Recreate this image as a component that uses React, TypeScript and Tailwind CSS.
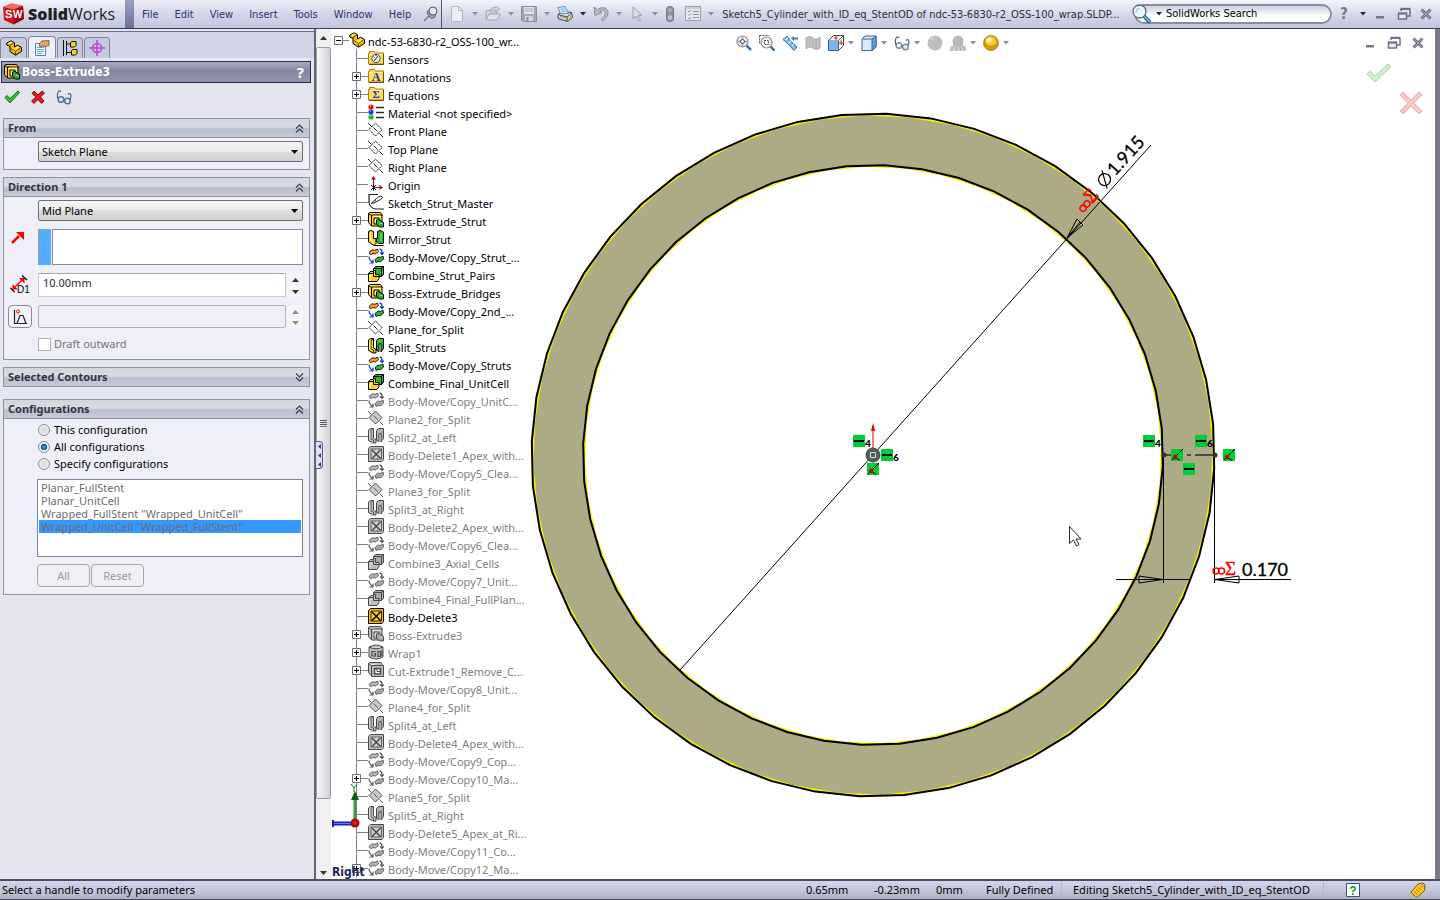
import { useState } from "react";
import type { ReactNode } from "react";

/* ---------- shared bits ---------- */

function Caret({ dark = false }: { dark?: boolean }) {
  return (
    <svg viewBox="0 0 6 4" className="h-1 w-1.5 shrink-0" aria-hidden="true">
      <path d="M0 0h6L3 3.5z" fill={dark ? "#25254f" : "#8b8d9c"} />
    </svg>
  );
}

function Svg16({ children }: { children: ReactNode }) {
  return (
    <svg viewBox="0 0 16 16" className="block h-4 w-4 shrink-0" fill="none" aria-hidden="true">
      {children}
    </svg>
  );
}

/* ---------- feature tree icons ---------- */

type Kind =
  | "sensors" | "annotations" | "equations" | "material" | "plane" | "origin" | "sketch"
  | "extrude" | "mirror" | "move" | "combine" | "split" | "delete" | "wrap" | "cut";

function PartIcon() {
  return (
    <Svg16>
      <path d="M.8 3 5 .8l3.500 2v4l3-1.600 4 2.200v4L9.500 15.200 4 11.500V6.500L.8 5z" fill="#f0b800" stroke="#000" strokeLinejoin="round" />
      <path d="M1.500 3.200 5 1.500l2.500 1.400L4.300 4.600zM5.500 7.500 8 8.800l3.500-2.600 3 1.500-5 3.500L5 8.500z" fill="#ffe45c" />
      <path d="M4.300 4.800v2M4.300 4.800 8 2.900M9.500 11.300V15M9.500 11.300l5.500-3.700M4.500 8l5 3.300" stroke="#4a3600" strokeWidth=".8" />
    </Svg16>
  );
}

function FolderBase({ children }: { children: ReactNode }) {
  return (
    <Svg16>
      <path d="M.5 3.500h1v-2h5l1 1.500h8v11H.5z" fill="#ffdc5e" stroke="#b87a00" />
      <path d="M1.500 4.500h13" stroke="#fff3b8" />
      <path d="M1 14.500h14.500V4" stroke="#6b4700" />
      {children}
    </Svg16>
  );
}

function FeatureIcon({ kind, dim }: { kind: Kind; dim: boolean }) {
  const ink = dim ? "#4a4a4a" : "#000";
  const yellow = dim ? "#bdbdbd" : "#ffd21c";
  const pale = dim ? "#dedede" : "#fff2a0";
  const green = dim ? "#a8a8a8" : "#22b532";
  const paleGreen = dim ? "#c8c8c8" : "#7be07c";
  const orange = dim ? "#b4b4b4" : "#ff9a1c";
  const blue = dim ? "#555" : "#1434d8";
  switch (kind) {
    case "sensors":
      return (
        <FolderBase>
          <circle cx="8" cy="8.500" r="4.200" fill="#e9f1fb" stroke="#34424f" />
          <path d="m6 11 4-5M5.500 6.500l1 1M8 5v1" stroke="#1b2b3a" />
        </FolderBase>
      );
    case "annotations":
      return (
        <FolderBase>
          <text x="8" y="13" textAnchor="middle" fontSize="12" fontWeight="bold" fontFamily="Liberation Serif, serif" fill="#1733c9">A</text>
        </FolderBase>
      );
    case "equations":
      return (
        <FolderBase>
          <text x="8" y="12" textAnchor="middle" fontSize="11" fontWeight="bold" fontFamily="Liberation Serif, serif" fill="#1733c9">Σ</text>
        </FolderBase>
      );
    case "material":
      return (
        <Svg16>
          <circle cx="3" cy="3" r="2.600" fill="#e01414" />
          <circle cx="3" cy="8" r="2.600" fill="#1638e0" />
          <circle cx="3" cy="13" r="2.600" fill="#17b52c" />
          <path d="M2 2h1M2 7h1M2 12h1" stroke="#fff" />
          <path d="M8 3.500h8M8 8.500h8M8 13.500h8" stroke="#2b2b2b" strokeWidth="1.500" />
        </Svg16>
      );
    case "plane":
      return (
        <Svg16>
          <path d="M1 7.500 7.500 1 14 7.500 7.500 14z" fill={dim ? "#c9c9c9" : "none"} stroke={dim ? "#555" : "#222"} strokeDasharray={dim ? undefined : "2 .6"} />
          <path d="m0 1 3.500 3.500M5.500 5.500l4 4M11.500 11.500 15 15" stroke={dim ? "#555" : "#222"} />
        </Svg16>
      );
    case "origin":
      return (
        <Svg16>
          <path d="M5.500 11V2M6 11.500h7" stroke="#a01414" strokeWidth="1.200" />
          <path d="M5.500 0 8 3.500H3zM15 11.500 11.500 9v5z" fill="#a01414" />
          <path d="m3 9 5 5M8 9l-5 5M5.500 8.500v6" stroke="#111" />
        </Svg16>
      );
    case "sketch":
      return (
        <Svg16>
          <path d="M10 .5H1v8q1 6 7 6.500h8" stroke="#222" strokeWidth="1.200" />
          <path d="M4 8.500 11 2.500q2.500-1 3.500.5 0 1.500-2 2.500L6 9z" fill="#fff" stroke="#222" />
          <path d="m7 6.500 1.500 1M3 9.500l2-.5" stroke="#222" />
        </Svg16>
      );
    case "extrude":
      return (
        <Svg16>
          <path d="M.5 1.500 2 .5h10.500l1.500 2V4M.5 1.500v9L3.500 14V3.500z" fill={yellow} stroke={ink} />
          <path d="M3.500 3h10.500v11H3.500z" fill={yellow} stroke={ink} />
          <path d="M5 4.500h8" stroke={pale} strokeWidth="1.500" />
          <path d="M6 6h5v2.500H8.500V12H6z" fill={pale} stroke={ink} />
          <path d="m8.500 8 2.500-.5 4.500 3V15h-4l-3-3z" fill={green} stroke={ink} />
          <path d="M11.500 11.500h3" stroke={paleGreen} />
        </Svg16>
      );
    case "mirror":
      return (
        <Svg16>
          <path d="M.5 1.500 3 .5l2.500 1v7H8v5L6 15.500.5 12z" fill={yellow} stroke={ink} />
          <path d="M2.500 2.500v8l3.500 2" stroke={pale} />
          <path d="m14.500 1.500-2.500-1-2.500 1v7H8.300V11l2.200 2.500h5V2z" fill={green} stroke={ink} />
          <path d="M13 3v8" stroke={paleGreen} />
          <path d="M6 15.500h9.500" stroke={ink} />
        </Svg16>
      );
    case "move":
      return (
        <Svg16>
          <path d="M1 4.500 4 1.800l3 .4L9.500 1l1 2.500L7.500 6 5 5.500 2.500 6.800z" fill={orange} stroke={ink} strokeWidth=".8" />
          <path d="M7 11.500 10 9l2.500.3L15 8l.7 3-3 2.700-2.700-.3L8 14.500z" fill={green} stroke={ink} strokeWidth=".8" />
          <path d="M11.500.8q3 .4 2.500 5M12 4.500l2 2 1.800-2M1 8.500q.2 4 4 6M5 11.500V15H1.500" stroke={blue} strokeWidth="1.200" />
        </Svg16>
      );
    case "combine":
      return (
        <Svg16>
          <path d="m5.500 2.500 2-2h8v8l-2 2h-8z" fill={green} stroke={ink} />
          <path d="M5.500 2.500h8v8M13.500 2.500l2-2" stroke={ink} />
          <path d="m.5 7.500 2-2h3v-1h2v4h3.500v4l-2 3H.5z" fill={yellow} stroke={ink} />
          <path d="M5.500 5.500v5H11M.5 7.500h5" stroke={ink} />
          <path d="M2 9.500h2.500M2 9.500v4" stroke={pale} />
        </Svg16>
      );
    case "split":
      return (
        <Svg16>
          <path d="m.5 2 2-1.500h3v9.500l2.500 1.500v3.500H5L.5 12.500z" fill={yellow} stroke={ink} />
          <path d="M3 2.500v8.500L5.500 12M3 2.500l2-1.500M5.500 12v3" stroke={ink} strokeWidth=".8" />
          <path d="M8.500 2.500 10.500.5h5v10l-2.500 3.500V5.500l-2 .5v7.500l-2.500-1z" fill={green} stroke={ink} />
          <path d="M1.800 3v8" stroke={pale} />
          <path d="M10 3.500 14 2.500" stroke={paleGreen} />
        </Svg16>
      );
    case "delete":
      return (
        <Svg16>
          <path d="M.5 2.500 2.500.5h13v13L14 15.500H.5z" fill={dim ? "#bdbdbd" : "#ffb800"} stroke={ink} />
          <path d="M3 3h10.500v10H3z" fill={dim ? "#cfcfcf" : "#ffd21c"} stroke={ink} strokeWidth=".8" />
          <path d="m4 4 8.500 8.500M12.500 4 4 12.500" stroke={ink} strokeWidth="1.500" />
        </Svg16>
      );
    case "wrap":
      return (
        <Svg16>
          <path d="M1 3q7-4 14 0v10q-7 4-14 0z" fill={yellow} stroke={ink} />
          <path d="M1 3q7 3.500 14 0" fill={pale} stroke={ink} />
          <path d="M7.500 7.500H4v4.500h3.500V9.500H6M10 7.500h2.500v5H10zM14 6v6" stroke={ink} strokeWidth="1.200" />
        </Svg16>
      );
    case "cut":
      return (
        <Svg16>
          <path d="M.5 1.500 2 .5h11l1.500 2V4M.5 1.500v9L3.500 14V3.500z" fill={yellow} stroke={ink} />
          <path d="M3.500 3.500h12v11h-12z" fill={yellow} stroke={ink} />
          <path d="M6.500 6.500h6v5.500h-6z" fill="#fff" stroke={ink} strokeWidth="1.500" />
          <path d="M9 7v2.500h3" stroke={ink} />
        </Svg16>
      );
  }
}

/* ---------- feature tree ---------- */

type Feature = { label: string; kind: Kind; dim?: boolean; branch?: boolean };

const features: Feature[] = [
  { label: "Sensors", kind: "sensors" },
  { label: "Annotations", kind: "annotations", branch: true },
  { label: "Equations", kind: "equations", branch: true },
  { label: "Material <not specified>", kind: "material" },
  { label: "Front Plane", kind: "plane" },
  { label: "Top Plane", kind: "plane" },
  { label: "Right Plane", kind: "plane" },
  { label: "Origin", kind: "origin" },
  { label: "Sketch_Strut_Master", kind: "sketch" },
  { label: "Boss-Extrude_Strut", kind: "extrude", branch: true },
  { label: "Mirror_Strut", kind: "mirror" },
  { label: "Body-Move/Copy_Strut_...", kind: "move" },
  { label: "Combine_Strut_Pairs", kind: "combine" },
  { label: "Boss-Extrude_Bridges", kind: "extrude", branch: true },
  { label: "Body-Move/Copy_2nd_...", kind: "move" },
  { label: "Plane_for_Split", kind: "plane" },
  { label: "Split_Struts", kind: "split" },
  { label: "Body-Move/Copy_Struts", kind: "move" },
  { label: "Combine_Final_UnitCell", kind: "combine" },
  { label: "Body-Move/Copy_UnitC...", kind: "move", dim: true },
  { label: "Plane2_for_Split", kind: "plane", dim: true },
  { label: "Split2_at_Left", kind: "split", dim: true },
  { label: "Body-Delete1_Apex_with...", kind: "delete", dim: true },
  { label: "Body-Move/Copy5_Clea...", kind: "move", dim: true },
  { label: "Plane3_for_Split", kind: "plane", dim: true },
  { label: "Split3_at_Right", kind: "split", dim: true },
  { label: "Body-Delete2_Apex_with...", kind: "delete", dim: true },
  { label: "Body-Move/Copy6_Clea...", kind: "move", dim: true },
  { label: "Combine3_Axial_Cells", kind: "combine", dim: true },
  { label: "Body-Move/Copy7_Unit...", kind: "move", dim: true },
  { label: "Combine4_Final_FullPlan...", kind: "combine", dim: true },
  { label: "Body-Delete3", kind: "delete" },
  { label: "Boss-Extrude3", kind: "extrude", dim: true, branch: true },
  { label: "Wrap1", kind: "wrap", dim: true, branch: true },
  { label: "Cut-Extrude1_Remove_C...", kind: "cut", dim: true, branch: true },
  { label: "Body-Move/Copy8_Unit...", kind: "move", dim: true },
  { label: "Plane4_for_Split", kind: "plane", dim: true },
  { label: "Split4_at_Left", kind: "split", dim: true },
  { label: "Body-Delete4_Apex_with...", kind: "delete", dim: true },
  { label: "Body-Move/Copy9_Cop...", kind: "move", dim: true },
  { label: "Body-Move/Copy10_Ma...", kind: "move", dim: true, branch: true },
  { label: "Plane5_for_Split", kind: "plane", dim: true },
  { label: "Split5_at_Right", kind: "split", dim: true },
  { label: "Body-Delete5_Apex_at_Ri...", kind: "delete", dim: true },
  { label: "Body-Move/Copy11_Co...", kind: "move", dim: true },
  { label: "Body-Move/Copy12_Ma...", kind: "move", dim: true, branch: true },
];

function Expander({ open = false }: { open?: boolean }) {
  return (
    <svg viewBox="0 0 9 9" className="block h-[9px] w-[9px] shrink-0" aria-hidden="true">
      <path d="M.5.5h8v8h-8z" fill="#fff" stroke="#6d6d6d" />
      <path d={open ? "M2 4.500h5" : "M2 4.500h5M4.500 2v5"} stroke="#000" />
    </svg>
  );
}

function FeatureTree() {
  return (
    <div className="flex w-[202px] flex-col overflow-hidden pt-[2px] font-['Noto_Sans',sans-serif] text-[11px] leading-[18px] text-black">
      <div className="flex h-[18px] shrink-0 items-center whitespace-nowrap">
        <Expander open />
        <span className="h-px w-1.5 shrink-0 bg-[#808080]" />
        <span className="mr-[3px]"><PartIcon /></span>
        <span className="pt-1">ndc-53-6830-r2_OSS-100_wr...</span>
      </div>
      <ul className="min-h-0 flex-1 overflow-hidden">
        {features.map((f) => (
          <li key={f.label} className="flex h-[18px] items-center whitespace-nowrap pl-[18px]">
            <span className="flex h-[18px] w-[9px] shrink-0 items-center justify-center bg-[linear-gradient(#808080,#808080)] bg-[length:1px_100%] bg-center bg-no-repeat">
              {f.branch && <Expander />}
            </span>
            <span className={f.branch ? "h-px w-[7px] shrink-0 bg-[#808080]" : "-ml-1 h-px w-[11px] shrink-0 bg-[#808080]"} />
            <span className="mr-1"><FeatureIcon kind={f.kind} dim={!!f.dim} /></span>
            <span className={f.dim ? "pt-[3px] text-[#808080]" : "pt-[3px] text-black"}>{f.label}</span>
          </li>
        ))}
      </ul>
    </div>
  );
}

/* ---------- title bar ---------- */

const menus = ["File", "Edit", "View", "Insert", "Tools", "Window", "Help"];

function NewIcon() {
  return <Svg16><path d="M2.500.5h7l4 4v11h-11z" fill="#eceef4" stroke="#b3b5c0" /><path d="M9.500.5v4h4" stroke="#b3b5c0" /></Svg16>;
}
function OpenIcon() {
  return (
    <Svg16>
      <path d="M1 14V4.500h4l1 1.500h6v2" fill="#d3d5dc" stroke="#a2a4ae" />
      <path d="m1 14 3-6h11.500L12 14z" fill="#dfe1e8" stroke="#a2a4ae" />
      <path d="M5 4q2-3.500 6-2.500V0l4 3-4 3V4.200Q8 3.500 5 4z" fill="#d3d5dc" stroke="#a2a4ae" strokeWidth=".8" />
    </Svg16>
  );
}
function SaveIcon() {
  return (
    <Svg16>
      <path d="M.5.5h15v15H2l-1.500-1.500z" fill="#a5a7b0" stroke="#8c8e98" />
      <path d="M3 1h10v7H3z" fill="#e2e3e9" /><path d="M4 3h8M4 5h8" stroke="#a8aab3" />
      <path d="M4 10h8v5H4z" fill="#d5d6dd" /><path d="M5.500 11h2v4h-2z" fill="#8c8e98" />
    </Svg16>
  );
}
function PrintIcon() {
  return (
    <Svg16>
      <path d="m1 8.500 4-3 9.500 1 1 5-5 4L1 12.500z" fill="#dcdcdc" stroke="#3f3f46" />
      <path d="M3.500 7.500 1 1.500 8 .5l3.500 7z" fill="#d8eefc" stroke="#5c92ba" /><path d="m3.500 3.500 4-.7M4.500 5.500l4-.6" stroke="#72a6cf" />
      <path d="m1 8.500 9 2.500 5-4M10 11v4.500" stroke="#3f3f46" /><path d="m3 10.500 5.500 1.700" stroke="#888" /><path d="m11.500 12.500 3-2.200" stroke="#e8b800" strokeWidth="1.500" />
    </Svg16>
  );
}
function UndoIcon() {
  return <Svg16><path d="m1 1 1 8.500 7-3-2.500-1Q10 3 12 5.500q1.500 3.500-4 8l2 1.500q7-6 4.500-11Q11-.5 4.500 3.500z" fill="#b9bbc5" stroke="#8c8e98" /></Svg16>;
}
function SelectIcon() {
  return <Svg16><path d="M4 .8v12L7 10l2.500 5 2-1L9 9.300h4z" fill="#dcdee7" stroke="#9c9ea9" /></Svg16>;
}
function RebuildIcon() {
  return <Svg16><rect x="4.500" y=".5" width="7" height="15" rx="3" fill="#8f9099" stroke="#77787f" /><circle cx="8" cy="4" r="2" fill="#a9aab2" /><circle cx="8" cy="11.500" r="2.200" fill="#c3c4cb" /></Svg16>;
}
function OptionsIcon() {
  return (
    <Svg16>
      <path d="M.5.5h15v14H.5z" fill="#e6e7ee" stroke="#9fa1ab" /><path d="M1 2h14" stroke="#b7b9c2" />
      <path d="M8 5.500h6M8 8.500h6M8 11.500h6" stroke="#94969f" /><path d="m3 5 1 1 2-2M3 8.500l1 1 2-2M3 12l1 1 2-2" stroke="#94969f" />
    </Svg16>
  );
}

const tools: { name: string; icon: ReactNode; caret: boolean; active?: boolean }[] = [
  { name: "New", icon: <NewIcon />, caret: true },
  { name: "Open", icon: <OpenIcon />, caret: true },
  { name: "Save", icon: <SaveIcon />, caret: true },
  { name: "Print", icon: <PrintIcon />, caret: true, active: true },
  { name: "Undo", icon: <UndoIcon />, caret: true },
  { name: "Select", icon: <SelectIcon />, caret: true },
  { name: "Rebuild", icon: <RebuildIcon />, caret: false },
  { name: "Options", icon: <OptionsIcon />, caret: true },
];

function MinimizeIcon() {
  return <Svg16><path d="M4 10h8v2.500H4z" fill="#77798a" /></Svg16>;
}
function RestoreIcon() {
  return <Svg16><path d="M5 5V3h9v7h-3" stroke="#6f7182" strokeWidth="1.500" /><path d="M5 2.800h9" stroke="#6f7182" strokeWidth="2" /><path d="M2.500 7.500h8v5.500h-8z" fill="#eceef6" stroke="#6f7182" strokeWidth="1.500" /><path d="M2 7.500h9" stroke="#6f7182" strokeWidth="2" /></Svg16>;
}
function CloseIcon() {
  return <Svg16><path d="m3.500 3.500 9 9M12.500 3.500l-9 9" stroke="#6f7182" strokeWidth="3" /><path d="m3.500 3.500 9 9M12.500 3.500l-9 9" stroke="#a6a8b6" strokeWidth="1" /></Svg16>;
}

function TitleBar() {
  return (
    <header className="flex h-[29px] shrink-0 items-stretch border-b border-[#3d3c55] bg-[linear-gradient(#f3f6fd,#d9dcec_45%,#bfc4dc)] font-['DejaVu_Sans_Condensed','DejaVu_Sans',sans-serif] text-[11px]">
      <div className="flex w-[125px] shrink-0 items-center gap-[3px] pl-[3px]">
        <svg viewBox="0 0 22 22" className="h-[22px] w-[22px] shrink-0" aria-hidden="true">
          <path d="M0 4 9 .5l11 2.500L21 16 10.500 21.500 1 17z" fill="#d2131d" />
          <path d="M0 4 9 .5l11 2.500-9 3.500z" fill="#f46a62" />
          <path d="m11 6.500 9-3.500 1 13-10.500 5.500z" fill="#9e0912" />
          <text x="2" y="15" fontSize="11" fontWeight="bold" fontFamily="Liberation Sans, sans-serif" fill="#fff">S</text>
          <text x="10" y="15" fontSize="10" fontWeight="bold" fontFamily="Liberation Sans, sans-serif" fill="#fff">W</text>
        </svg>
        <span className="font-['Open_Sans',sans-serif] text-[16px] text-[#222]"><b className="font-extrabold">Solid</b>Works</span>
      </div>
      <div className="w-[9px] shrink-0 bg-[linear-gradient(#9da1c0,#6c7098)]" />
      <nav className="flex shrink-0 items-center gap-4 border-r border-[#55566e] bg-[linear-gradient(#eceef8,#d3d6e8_50%,#c3c7dd)] pr-0.5 pl-2 text-[#2d3172]">
        {menus.map((m) => (
          <button key={m} type="button" className="pt-[2px]">{m}</button>
        ))}
        <button type="button" aria-label="Pin menu" className="-ml-1">
          <Svg16>
            <path d="m1 15 5-5" stroke="#77798c" strokeWidth="1.500" />
            <path d="M4 7 8 12.500q4 0 5-3.500L6.500 3.500Q3.500 5 4 7z" fill="#9a9cae" stroke="#55566e" strokeWidth=".8" />
            <circle cx="10" cy="5" r="4" fill="#e4e6f0" stroke="#55566e" />
          </Svg16>
        </button>
      </nav>
      <div className="flex shrink-0 items-center pl-1">
        {tools.map((t) => (
          <button key={t.name} type="button" aria-label={t.name} className={t.caret ? "flex w-9 items-center gap-[7px] pl-[3px]" : "flex w-5 items-center"}>
            {t.icon}
            {t.caret && <Caret dark={t.active} />}
          </button>
        ))}
      </div>
      <h1 className="min-w-0 flex-1 self-center overflow-hidden pt-[2px] pl-1 whitespace-nowrap text-[#2e2e3c]">
        Sketch5_Cylinder_with_ID_eq_StentOD of ndc-53-6830-r2_OSS-100_wrap.SLDP...
      </h1>
      <div className="flex shrink-0 items-center pr-1.5">
        <label className="flex h-5 w-[198px] items-center gap-1 rounded-full border-2 border-[#8b8d9b] bg-[linear-gradient(#c9cee2,#fff_60%)] pr-2">
          <svg viewBox="0 0 20 20" className="-ml-1 h-5 w-5 shrink-0" fill="none" aria-hidden="true">
            <path d="m12 12 6 6.500" stroke="#1f5f94" strokeWidth="4" />
            <path d="m12 12 6 6" stroke="#7cc0ee" strokeWidth="1.500" />
            <circle cx="7.500" cy="7.500" r="6.500" fill="#eaf6ff" stroke="#5b6b7c" strokeWidth="1.300" />
            <path d="M4 9q0-4 4-5" stroke="#a8cdea" strokeWidth="1.500" />
          </svg>
          <Caret dark />
          <input aria-label="SolidWorks Search" defaultValue="SolidWorks Search" className="min-w-0 flex-1 bg-transparent text-black outline-none" />
        </label>
        <button type="button" aria-label="Help" className="ml-1.5 flex items-center gap-2.5">
          <span className="w-3 text-center text-[15px] leading-4 font-bold text-[#77798a]">?</span>
          <Caret dark />
        </button>
        <button type="button" aria-label="Minimize" className="ml-1.5"><MinimizeIcon /></button>
        <button type="button" aria-label="Restore" className="ml-2"><RestoreIcon /></button>
        <button type="button" aria-label="Close" className="ml-1.5"><CloseIcon /></button>
      </div>
    </header>
  );
}

/* ---------- property panel ---------- */

function GlassesIcon({ tint = "#7fa6c9" }: { tint?: string }) {
  return (
    <Svg16>
      <circle cx="5" cy="10.500" r="2.800" fill="#e2eef8" stroke={tint} strokeWidth="1.400" />
      <circle cx="11.500" cy="12" r="2.800" fill="#e2eef8" stroke={tint} strokeWidth="1.400" />
      <path d="M2 10Q.5 5 2.500 2.500 4 1 5 3M7.500 11l1.500.3M14 10.500q1.500-3 .5-5.500-1.500-1-2.500.5" stroke="#59606c" strokeWidth="1.200" />
    </Svg16>
  );
}

function Group({ title, open = true, children }: { title: string; open?: boolean; children?: ReactNode }) {
  return (
    <section className="border border-[#9194a6] bg-[#efeff8]">
      <h2>
        <button type="button" aria-expanded={open} className={open ? "flex h-[19px] w-full items-center justify-between border-b border-[#9194a6] bg-[linear-gradient(#d2d5de,#d8dce2_45%,#b9bece_55%,#c6cad8)] px-1 font-bold text-[#333545]" : "flex h-[18px] w-full items-center justify-between bg-[linear-gradient(#d2d5de,#d8dce2_45%,#b9bece_55%,#c6cad8)] px-1 font-bold text-[#333545]"}>
          {title}
          <svg viewBox="0 0 9 9" className="mr-px h-[9px] w-[9px]" fill="none" stroke="#3b3d4d" strokeWidth="1.200" aria-hidden="true">
            <path d={open ? "M1 4.500 4.500 1 8 4.500M1 8.500 4.500 5 8 8.500" : "M1 .5 4.500 4 8 .5M1 4.500 4.500 8 8 4.500"} />
          </svg>
        </button>
      </h2>
      {children}
    </section>
  );
}

function Drop({ label, value, other }: { label: string; value: string; other: string }) {
  return (
    <div className="relative">
      <select aria-label={label} defaultValue={value} className="block h-[21px] w-full appearance-none rounded-xs border border-[#707070] bg-[linear-gradient(#f4f4f4,#ebebeb_50%,#dddddd_50%,#d0d0d0)] pl-[3px] text-black">
        <option>{value}</option>
        <option>{other}</option>
      </select>
      <svg viewBox="0 0 7 4" className="pointer-events-none absolute top-[9px] right-[5px] h-1 w-[7px]" aria-hidden="true"><path d="M0 0h7L3.500 4z" fill="#000" /></svg>
    </div>
  );
}

function Spinner({ off = false }: { off?: boolean }) {
  const c = off ? "#8c8c8c" : "#333";
  return (
    <div className="flex w-4 flex-col items-center justify-between bg-[#f5f5f8] pt-[5px] pb-[3px]">
      <button type="button" disabled={off} aria-label="Increase"><svg viewBox="0 0 7 4" className="block h-1 w-[7px]"><path d="M0 4h7L3.500 0z" fill={c} /></svg></button>
      <button type="button" disabled={off} aria-label="Decrease"><svg viewBox="0 0 7 4" className="block h-1 w-[7px]"><path d="M0 0h7L3.500 4z" fill={c} /></svg></button>
    </div>
  );
}

const scopes = ["This configuration", "All configurations", "Specify configurations"];
const configs = ["Planar_FullStent", "Planar_UnitCell", "Wrapped_FullStent \"Wrapped_UnitCell\"", "Wrapped_UnitCell \"Wrapped_FullStent\""];

function PropertyPanel() {
  const [scope, setScope] = useState(scopes[1]);
  return (
    <aside className="flex w-[316px] shrink-0 flex-col border-r-2 border-[#62637a] bg-[#e4e5ef] font-['Noto_Sans',sans-serif] text-[11px] leading-4">
      <div className="mt-[2px] flex h-[27px] items-end gap-px border-t border-[#6e7088] bg-[#d0d4e6]">
        <button type="button" aria-label="Feature manager" className="flex h-[21px] w-[27px] items-center justify-center rounded-t border border-b-0 border-[#8285a0] bg-[#c6cadf]"><PartIcon /></button>
        <button type="button" aria-label="Property manager" className="flex h-[22px] w-7 items-center justify-center rounded-t border border-b-0 border-[#8285a0] bg-[#eeeff7]">
          <Svg16>
            <path d="M1.500 3.500h10v12h-10z" fill="#f4f9ff" stroke="#4c86c6" /><path d="M3 7.500h7M3 9.500h7M3 11.500h7M3 13.500h5" stroke="#6ea4dc" />
            <path d="M5 4 8 1l7-.5v5l-4 1-3-.5-2 1z" fill="#dfa46c" stroke="#7c4a1c" strokeWidth=".8" />
          </Svg16>
        </button>
        <button type="button" aria-label="Configuration manager" className="flex h-[21px] w-[26px] items-center justify-center rounded-t border border-b-0 border-[#8285a0] bg-[#c6cadf]">
          <Svg16>
            <path d="M1.500 0v16M4.500 1v14M4.500 4H9M4.500 12.500H9" stroke="#111" />
            <path d="m8.500 2.500 1.500-1h4v4l-1.500 1.500h-4zM9.500 10.500l1.500-1h4v4L13.500 15h-4z" fill="#ffd21c" stroke="#111" />
          </Svg16>
        </button>
        <button type="button" aria-label="Dimension manager" className="flex h-[21px] w-[26px] items-center justify-center rounded-t border border-b-0 border-[#8285a0] bg-[#c6cadf]">
          <Svg16><circle cx="8" cy="8" r="4.500" stroke="#c23fd0" strokeWidth="1.500" /><path d="M8 0v16M0 8h16" stroke="#c23fd0" strokeWidth="1.500" /></Svg16>
        </button>
      </div>
      <div className="mx-px mt-[3px] mr-[3px] flex h-[22px] shrink-0 items-center gap-[2px] border border-[#2a2c55] bg-[linear-gradient(#a9abbf,#83859f_45%,#9496ae)] px-[2px] text-white">
        <FeatureIcon kind="extrude" dim={false} />
        <h1 className="flex-1 font-['DejaVu_Sans_Condensed','DejaVu_Sans',sans-serif] text-[12px] font-bold">Boss-Extrude3</h1>
        <button type="button" aria-label="Help" className="mr-1 text-[15px] font-bold">?</button>
      </div>
      <div className="flex h-[35px] shrink-0 items-start gap-2.5 pt-1.5 pl-1">
        <button type="button" aria-label="OK"><Svg16><path d="m1 8.500 2-2 3 3L14 2l1.500 1.500L6 14z" fill="#2fc82f" stroke="#0c6f12" /></Svg16></button>
        <button type="button" aria-label="Cancel"><Svg16><path d="m2 4.500 2-2.500 4 4 4-4 2.500 2L10.500 8l3.500 4-2.500 2.500L8 10.500l-4 4L1.500 12 6 8z" fill="#e21c1c" stroke="#8a0c0c" /></Svg16></button>
        <button type="button" aria-label="Detailed preview"><GlassesIcon tint="#4e7396" /></button>
      </div>
      <div className="flex flex-col gap-[7px] pr-1 pl-[3px]">
        <Group title="From">
          <div className="pt-[3px] pr-1.5 pb-[7px] pl-[34px]"><Drop label="From" value="Sketch Plane" other="Offset" /></div>
        </Group>
        <Group title="Direction 1">
          <div className="grid grid-cols-[34px_1fr] pt-[3px] pr-1.5 pb-[7px]">
            <span />
            <Drop label="End condition" value="Mid Plane" other="Blind" />
            <button type="button" aria-label="Reverse direction" className="mt-2 flex pl-1.5">
              <Svg16><path d="m2 14 7-7" stroke="#f00" strokeWidth="2.500" /><path d="M6 3h8v8z" fill="#f00" /></Svg16>
            </button>
            <div className="mt-2 flex h-9 gap-px">
              <div className="w-[13px] border-t border-l border-[#a0a0a0] bg-[#54aeff]" />
              <div className="flex-1 border border-[#8488a8] bg-white" />
            </div>
            <span className="mt-2 flex items-center pl-1.5">
              <svg viewBox="0 0 20 20" className="h-5 w-5" fill="none" aria-hidden="true">
                <path d="m4 13 9-9" stroke="#f00" strokeWidth="1.500" /><path d="M9 3h5.500v5.500zM2.500 9v5.500H8z" fill="#f00" />
                <path d="m12 .5 5 4.500M.5 13l4 4" stroke="#000" strokeWidth="1.200" />
                <text x="7" y="18" fontSize="10" fontFamily="Liberation Sans, sans-serif" fill="#000">D1</text>
              </svg>
            </span>
            <div className="mt-2 flex h-6 gap-px">
              <input aria-label="Depth" defaultValue="10.00mm" className="min-w-0 flex-1 border border-[#c6c9d4] border-t-[#a0a2ac] bg-white pb-1 pl-1 text-[#26284a]" />
              <Spinner />
            </div>
            <button type="button" aria-label="Draft on/off" className="mt-2 ml-1 flex h-[23px] w-6 items-center justify-center rounded border border-[#8a8c9a] bg-[#f2f2f8]">
              <Svg16><path d="M2.500 1v13.500H15M5 14.500l3-8h3l3 8" stroke="#222" strokeWidth="1.200" /><circle cx="6" cy="2.500" r="1.500" stroke="#f00" /></Svg16>
            </button>
            <div className="mt-2 flex h-[23px] gap-px">
              <input aria-label="Draft angle" disabled className="min-w-0 flex-1 rounded-xs border border-[#b0b2bc] bg-[#efeff8]" />
              <Spinner off />
            </div>
            <span />
            <label className="mt-2 flex h-4 items-center gap-[3px] text-[#73747c]">
              <input type="checkbox" disabled className="h-[13px] w-[13px] appearance-none border border-[#b4b4b4] bg-white" />
              Draft outward
            </label>
          </div>
        </Group>
        <Group title="Selected Contours" open={false} />
        <div className="pt-[5px]">
          <Group title="Configurations">
            <div className="pt-[2px] pr-1.5 pb-[7px] pl-[33px]">
              <fieldset>
                {scopes.map((s) => (
                  <label key={s} className="flex h-[17px] items-center gap-1 pl-px text-black">
                    <input type="radio" name="scope" checked={scope === s} onChange={() => setScope(s)} className="h-3 w-3 appearance-none rounded-full border border-[#8e8f8f] bg-[radial-gradient(#d8dadd,#f4f4f4)] checked:bg-[radial-gradient(circle,#2c8fd0_0_20%,#10406e_40%,#e8eef4_50%)]" />
                    {s}
                  </label>
                ))}
              </fieldset>
              <ul className="mt-[7px] h-[78px] border border-[#828296] bg-white px-px py-px leading-[13px] text-[#6d6d6d]">
                {configs.map((c, i) => (
                  <li key={c} className={i === 3 ? "h-[13px] bg-[#3399ff] pl-[2px] whitespace-nowrap" : "h-[13px] pl-[2px] whitespace-nowrap"}>{c}</li>
                ))}
              </ul>
              <div className="mt-[7px] flex gap-px">
                <button type="button" disabled className="h-[23px] w-[53px] rounded border border-[#a9aa9e] text-[#9b9c92]">All</button>
                <button type="button" disabled className="h-[23px] w-[53px] rounded border border-[#a9aa9e] text-[#9b9c92]">Reset</button>
              </div>
            </div>
          </Group>
        </div>
      </div>
    </aside>
  );
}

/* ---------- graphics area ---------- */

function ring(r: number, n: number, phase: number) {
  return Array.from({ length: n }, (_, i) => {
    const a = ((i + phase) / n) * Math.PI * 2;
    return `${(873 + r * Math.cos(a)).toFixed(1)} ${(455 + r * Math.sin(a)).toFixed(1)}`;
  }).join("L");
}
const loop = (r: number, n: number, phase: number) => `M${ring(r, n, phase)}Z`;

function Relation({ x, y, kind, tag }: { x: number; y: number; kind: "bar" | "point"; tag?: string }) {
  return (
    <g>
      <path d={`M${x} ${y}h12v12h-12z`} fill="#00cc33" />
      {kind === "bar" ? (
        <path d={`M${x + 1} ${y + 6}h10`} stroke="#000" strokeWidth="2" />
      ) : (
        <g>
          <path d={`M${x + 1} ${y + 11}L${x + 12} ${y}M${x + 4} ${y + 8}l5 3.500`} stroke="#000" />
          <circle cx={x + 4} cy={y + 8} r="2.200" fill="#d00000" />
        </g>
      )}
      {tag && <text x={x + 12} y={y + 12} fontSize="10" fontWeight="900" fontFamily="Lato, sans-serif" fill="#000">{tag}</text>}
    </g>
  );
}

function Sketch() {
  return (
    <svg viewBox="316 29 1119 850" className="pointer-events-none absolute inset-0 h-full w-full" fill="none" role="img" aria-label="Cylinder sketch, diameter 1.915, wall 0.170">
      <path d={loop(341.5, 48, 0.3) + loop(290, 48, 0.3)} fill="#acab86" fillRule="evenodd" />
      <path d={loop(340.5, 48, 0.8) + loop(289, 48, 0.8)} stroke="#f4f000" strokeWidth="2" />
      <path d={loop(341.5, 48, 0.3) + loop(290, 48, 0.3)} stroke="#000" strokeWidth="2" />
      <path d="M680 670 1151 145" stroke="#000" />
      <path d="m1067 238 10-19 6 6zl13-16" stroke="#000" />
      <g transform="translate(1105 188) rotate(-48)">
        <ellipse cx="6" cy="-6" rx="6" ry="6" stroke="#000" strokeWidth="1.200" />
        <path d="m1 2 10-16" stroke="#000" strokeWidth="1.200" />
        <text x="15" y="0" fontSize="18" fontFamily="Lato, sans-serif" fill="#000" stroke="#000" strokeWidth=".3">1.915</text>
      </g>
      <g transform="translate(1086 211) rotate(-48)">
        <circle cx="0" cy="-4" r="3" stroke="#f00" strokeWidth="1.500" /><circle cx="6" cy="-4" r="3" stroke="#f00" strokeWidth="1.500" />
        <text x="9" y="0" fontSize="20" fontFamily="Liberation Serif, serif" fill="#f00" stroke="#f00" strokeWidth=".4">Σ</text>
      </g>
      <path d="M1163.500 455v128M1214.500 455v128M1116 579.500h73M1215 579.500h76" stroke="#000" />
      <path d="M1163 579.500 1139 576v7zM1215 579.500l24-3.500v7z" stroke="#000" />
      <circle cx="1216" cy="571" r="3" stroke="#f00" strokeWidth="1.500" /><circle cx="1221.500" cy="571" r="3" stroke="#f00" strokeWidth="1.500" />
      <text x="1225" y="575" fontSize="19" fontFamily="Liberation Serif, serif" fill="#f00" stroke="#f00" strokeWidth=".4">Σ</text>
      <text x="1242" y="576" fontSize="18" fontFamily="Lato, sans-serif" fill="#000" stroke="#000" strokeWidth=".3">0.170</text>
      <path d="M1164 455h10M1187 455h4M1195 455h20" stroke="#4d4d40" strokeWidth="2" />
      <circle cx="1164" cy="455" r="2.500" fill="#333" /><circle cx="1215" cy="455" r="2.500" fill="#333" />
      <path d="M873 448v-22" stroke="#e00000" /><path d="m873 423 2 8h-4z" fill="#e00000" />
      <circle cx="873" cy="455" r="7" fill="#5a5a5a" stroke="#444" /><path d="M870.500 452.500h5v5h-5z" stroke="#ddd" />
      <Relation x={853} y={435} kind="bar" tag="4" />
      <Relation x={881} y={449} kind="bar" tag="6" />
      <Relation x={867} y={463} kind="point" />
      <Relation x={1143} y={435} kind="bar" tag="4" />
      <Relation x={1195} y={435} kind="bar" tag="6" />
      <Relation x={1171} y={449} kind="point" />
      <Relation x={1223} y={449} kind="point" />
      <Relation x={1183} y={463} kind="bar" />
      <path d="M1069.500 526.500v17l4-3.500 3 6 2.500-1.500-3-5.500h5z" fill="#fff" stroke="#26263a" />
    </svg>
  );
}

function Triad() {
  return (
    <svg viewBox="0 0 40 100" className="pointer-events-none absolute bottom-0 left-[14px] h-[100px] w-10" fill="none" aria-hidden="true">
      <path d="m21 5 3 4 3-4M24 9v4" stroke="#128a12" />
      <path d="M25 20v22" stroke="#3f9a3f" strokeWidth="3" /><path d="m25 12 4 9h-8z" fill="#0c5c14" />
      <path d="M3 44.500h20" stroke="#1c1cc8" strokeWidth="4" /><path d="M4 44.500h18" stroke="#6a74f0" /><path d="M3 41v7" stroke="#1616a8" strokeWidth="2" />
      <circle cx="25" cy="44" r="4.500" fill="#a01010" /><circle cx="25" cy="44" r="2" fill="#e81c1c" />
      <text x="2" y="97" fontSize="12" fontWeight="bold" fontFamily="DejaVu Sans Condensed, DejaVu Sans, sans-serif" fill="#26265e">Right</text>
    </svg>
  );
}

const lens = <><path d="m10.500 10.500 4.500 4.500" stroke="#3d76b4" strokeWidth="2.500" /><circle cx="6.500" cy="6.500" r="5.500" fill="#f2f2f4" stroke="#8a8a90" strokeWidth="1.200" /></>;

const viewTools: { name: string; icon: ReactNode; caret?: boolean }[] = [
  { name: "Zoom to fit", icon: <Svg16>{lens}<circle cx="6.500" cy="6.500" r="2" stroke="#444" /><path d="M6.500 2.500v1M6.500 9.500v1M2.500 6.500h1M9.500 6.500h1" stroke="#333" strokeWidth="1.500" /></Svg16> },
  { name: "Zoom to area", icon: <Svg16><path d="M.5.500h10M.5.500v9" stroke="#555" strokeDasharray="2 1" /><g transform="translate(1 1)">{lens}</g><path d="M5.500 5.500h4v4h-4z" stroke="#444" strokeDasharray="1.500 1" /></Svg16> },
  { name: "Previous view", icon: <Svg16><path d="m1 4.500 4-3.500L8.500 6l6.500 6-3 3.500L5.500 8.500z" fill="#7fb9ec" stroke="#3272ae" /><path d="M3 5l3-2M6.500 8l2.500-2M10 11l1.500-1.500" stroke="#fff" /><path d="M9 3.500 12 1v1.500h4v2h-4V6z" fill="#3a7cc0" /></Svg16> },
  { name: "Section view", icon: <Svg16><path d="M1 3q4-3 7 0t7-1v11q-4 3-7 0t-7 1z" fill="#c4c4c4" stroke="#a8a8a8" /><path d="M5 3v10M8 4v10M11 4v10" stroke="#ababab" /></Svg16> },
  { name: "View orientation", caret: true, icon: <Svg16><path d="M.5 5.500h10v10H.5z" fill="#7fb6ea" stroke="#2f6097" /><path d="m.5 5.500 5-5h10l-5 5M15.500.5v10l-5 5" fill="#fff" stroke="#444" /><path d="M8 1v4M6 3h4M13 5v5M11 8h4" stroke="#e02020" /></Svg16> },
  { name: "Display style", caret: true, icon: <Svg16><path d="m1 4 3-3h11v11l-4 3.500H1z" fill="#d8ebfb" stroke="#3a659a" /><path d="m11 4 4-3v11l-4 3.500z" fill="#5b9bdc" stroke="#3a659a" /><path d="M1 4h10" stroke="#3a659a" /></Svg16> },
  { name: "Hide/show items", caret: true, icon: <GlassesIcon tint="#83919e" /> },
  { name: "Edit appearance", icon: <Svg16><circle cx="8" cy="8" r="7.500" fill="#bebebe" /><path d="M4 5q1-2 3-2" stroke="#d6d6d6" strokeWidth="2" /></Svg16> },
  { name: "Apply scene", caret: true, icon: <Svg16><path d="M0 11h16v5H0z" fill="#cdcdcd" /><circle cx="8" cy="6" r="5.500" fill="#b8b8b8" /><path d="M3 11h10v-4H3z" fill="#b8b8b8" /><path d="m0 16 4-5M6 16l1-5M11 16l-1-5M16 16l-4-5" stroke="#aaa" /></Svg16> },
  { name: "View settings", caret: true, icon: <Svg16><circle cx="8" cy="8" r="7.500" fill="#d99a0a" stroke="#8a5d00" strokeWidth=".6" /><path d="M2.500 8q5.500 5 11 0Q12.500 1 8 1.500 3 1 2.500 8z" fill="#f7cf3c" /><circle cx="6" cy="5" r="2.500" fill="#fff6c4" /></Svg16> },
];

function Viewport() {
  return (
    <main className="relative flex min-w-0 flex-1 overflow-hidden border-r-[5px] border-[#7a7a8c] bg-white">
      <div className="flex w-[15px] shrink-0 flex-col items-center bg-[#f0f0f3]" aria-hidden="true">
        <svg viewBox="0 0 7 4" className="my-[7px] h-1 w-[7px] shrink-0"><path d="M0 4h7L3.500 0z" fill="#333" /></svg>
        <div className="flex w-[15px] flex-1 flex-col items-center justify-center gap-px rounded-xs border border-[#9a9ca6] bg-[linear-gradient(90deg,#f6f6f6,#e8e8eb_45%,#cfcfd6)]">
          <span className="h-px w-[7px] bg-[#555]" /><span className="h-px w-[7px] bg-[#555]" /><span className="h-px w-[7px] bg-[#555]" /><span className="h-px w-[7px] bg-[#777]" />
        </div>
        <div className="h-[72px] shrink-0" />
        <svg viewBox="0 0 7 4" className="mb-1 h-1 w-[7px] shrink-0"><path d="M0 0h7L3.500 4z" fill="#333" /></svg>
      </div>
      <button type="button" aria-label="Collapse panel" className="absolute top-[412px] left-0 flex h-7 w-[7px] flex-col items-center justify-center gap-1 rounded-r border border-l-0 border-[#5a5a84] bg-[#e0e1ee]">
        {[0, 1, 2].map((i) => (
          <svg key={i} viewBox="0 0 3 5" className="h-[5px] w-[3px]"><path d="M3 0v5L0 2.500z" fill="#3a3a8c" /></svg>
        ))}
      </button>
      <div className="flex pl-[3px]"><FeatureTree /></div>
      <Sketch />
      <Triad />
      <div className="flex min-w-0 flex-1 justify-between pt-1.5 pr-[9px] pl-[200px]">
        <div className="flex h-4 items-center">
          {viewTools.map((t) => (
            <button key={t.name} type="button" aria-label={t.name} className={t.caret ? "flex w-[33px] shrink-0 items-center gap-1" : "flex w-[23px] shrink-0 items-center"}>
              {t.icon}
              {t.caret && <Caret />}
            </button>
          ))}
        </div>
        <div className="flex shrink-0 flex-col items-end">
          <div className="flex gap-2">
            <button type="button" aria-label="Minimize document"><MinimizeIcon /></button>
            <button type="button" aria-label="Restore document"><RestoreIcon /></button>
            <button type="button" aria-label="Close document"><CloseIcon /></button>
          </div>
          <button type="button" aria-label="Accept sketch" className="mt-3 mr-[34px]">
            <svg viewBox="0 0 26 20" className="block h-5 w-[26px]"><path d="m1 11 3-3 5 5L22 1l3 2.500L9 19z" fill="#c8f5c8" stroke="#b0c8b0" /></svg>
          </button>
          <button type="button" aria-label="Discard sketch" className="mt-2 mr-[3px]">
            <svg viewBox="0 0 24 24" className="block h-6 w-6"><path d="M1 4 4 1l8 8 8-8 3 3-8 8 8 8-3 3-8-8-8 8-3-3 8-8z" fill="#fac6c6" stroke="#dcb4b4" /></svg>
          </button>
        </div>
      </div>
    </main>
  );
}

/* ---------- status bar ---------- */

function StatusBar() {
  return (
    <footer className="flex h-[21px] shrink-0 items-center border-y border-t-2 border-[#4b4c62] bg-[linear-gradient(#d2d4ea,#c4c6dc_50%,#aeb0bf)] pl-[2px] font-['Noto_Sans',sans-serif] text-[11px] whitespace-nowrap text-black">
      <p className="flex-1">Select a handle to modify parameters</p>
      <span className="w-[68px]">0.65mm</span>
      <span className="w-[62px]">-0.23mm</span>
      <span className="w-[50px]">0mm</span>
      <span className="w-[76px] border-r border-[#b4b4c4]">Fully Defined</span>
      <span className="w-[262px] border-r border-[#b4b4c4] pl-[11px]">Editing Sketch5_Cylinder_with_ID_eq_StentOD</span>
      <button type="button" aria-label="Quick tips" className="ml-[22px]">
        <svg viewBox="0 0 14 14" className="block h-3.5 w-3.5"><path d="M.5.5h13v13H.5z" fill="#fff" stroke="#34587c" /><text x="7" y="11.500" textAnchor="middle" fontSize="12" fontWeight="bold" fontFamily="Liberation Sans, sans-serif" fill="#0a9c1c">?</text></svg>
      </button>
      <button type="button" aria-label="Tags" className="mr-3.5 ml-[50px]">
        <Svg16><path d="M1.500 9.500 8 2l5-1 2 2-.5 5.500-7 6.500q-1 .5-2-.5L1.500 11q-.5-1 0-1.500z" fill="#ffc81e" stroke="#8a5200" /><circle cx="12" cy="4" r="1.200" fill="#fff" stroke="#8a5200" strokeWidth=".6" /><path d="m4 9.500 3.500 3M6 7.500l3.500 3M8 5.500l3 2.500" stroke="#b87400" /></Svg16>
      </button>
    </footer>
  );
}

export default function App() {
  return (
    <div className="flex h-screen flex-col overflow-hidden bg-[#e4e5ef]">
      <TitleBar />
      <div className="flex min-h-0 flex-1">
        <PropertyPanel />
        <Viewport />
      </div>
      <StatusBar />
    </div>
  );
}
